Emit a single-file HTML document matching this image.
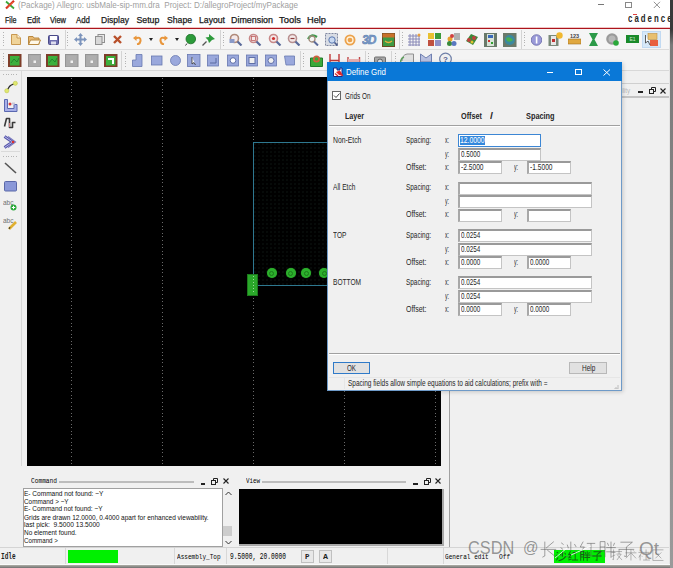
<!DOCTYPE html><html><head><meta charset="utf-8"><style>*{margin:0;padding:0;box-sizing:border-box}
html,body{width:673px;height:568px;overflow:hidden;background:#f0f0f0}
body{position:relative;font-family:"Liberation Sans",sans-serif}
div{position:absolute}
.t{position:absolute;white-space:pre;line-height:1;transform-origin:0 50%}
</style></head><body>
<div style="left:0px;top:0px;width:673px;height:27.5px;background:#fff"></div>
<div style="left:0px;top:27px;width:673px;height:4px;background:linear-gradient(to bottom,#f2c4c4 0,#f2c4c4 25%,#b0161e 25%,#9c1018 75%,#f6c0c0 75%)"></div>
<svg style="position:absolute;left:4.5px;top:0px" width="10" height="9.5" viewBox="0 0 10 9.5"><path d="M1 1.5L9 8.5" stroke="#3aa83a" stroke-width="1.8"/><path d="M1 8.5L9 0.8" stroke="#d83020" stroke-width="2.2"/><path d="M2.5 7L8 2" stroke="#f06030" stroke-width="1"/></svg>
<span class="t" style="left:18px;top:1.10px;font-size:8.5px;font-family:'Liberation Sans', sans-serif;color:#a0a0a0;font-weight:400;transform:scaleX(0.9498);">(Package) Allegro: usbMale-sip-mm.dra  Project: D:/allegroProject/myPackage</span>
<div style="left:598px;top:4px;width:6px;height:1px;background:#777"></div>
<div style="left:625px;top:1.5px;width:6.5px;height:6px;border:1px solid #888"></div>
<svg style="position:absolute;left:653px;top:1px" width="8" height="8" viewBox="0 0 8 8"><path d="M0.8 0.8L7 7M7 0.8L0.8 7" stroke="#888" stroke-width="0.9"/></svg>
<span class="t" style="left:627.5px;top:12.56px;font-size:11.5px;font-family:'Liberation Sans', sans-serif;color:#262626;font-weight:700;letter-spacing:3px;transform:scaleX(0.6794);">cadence</span>
<div style="left:633.4px;top:14px;width:3.7px;height:1.2px;background:#e04040"></div>
<span class="t" style="left:5px;top:16.26px;font-size:8.8px;font-family:'Liberation Sans', sans-serif;color:#1a1a1a;font-weight:400;transform:scaleX(0.8106);-webkit-text-stroke:0.25px #1a1a1a;">File</span>
<span class="t" style="left:26.8px;top:16.26px;font-size:8.8px;font-family:'Liberation Sans', sans-serif;color:#1a1a1a;font-weight:400;transform:scaleX(0.8568);-webkit-text-stroke:0.25px #1a1a1a;">Edit</span>
<span class="t" style="left:50px;top:16.26px;font-size:8.8px;font-family:'Liberation Sans', sans-serif;color:#1a1a1a;font-weight:400;transform:scaleX(0.8456);-webkit-text-stroke:0.25px #1a1a1a;">View</span>
<span class="t" style="left:76.3px;top:16.26px;font-size:8.8px;font-family:'Liberation Sans', sans-serif;color:#1a1a1a;font-weight:400;transform:scaleX(0.8942);-webkit-text-stroke:0.25px #1a1a1a;">Add</span>
<span class="t" style="left:101px;top:16.26px;font-size:8.8px;font-family:'Liberation Sans', sans-serif;color:#1a1a1a;font-weight:400;transform:scaleX(0.9707);-webkit-text-stroke:0.25px #1a1a1a;">Display</span>
<span class="t" style="left:136.4px;top:16.26px;font-size:8.8px;font-family:'Liberation Sans', sans-serif;color:#1a1a1a;font-weight:400;-webkit-text-stroke:0.25px #1a1a1a;">Setup</span>
<span class="t" style="left:166.7px;top:16.26px;font-size:8.8px;font-family:'Liberation Sans', sans-serif;color:#1a1a1a;font-weight:400;transform:scaleX(0.9828);-webkit-text-stroke:0.25px #1a1a1a;">Shape</span>
<span class="t" style="left:198.6px;top:16.26px;font-size:8.8px;font-family:'Liberation Sans', sans-serif;color:#1a1a1a;font-weight:400;transform:scaleX(0.9840);-webkit-text-stroke:0.25px #1a1a1a;">Layout</span>
<span class="t" style="left:231.4px;top:16.26px;font-size:8.8px;font-family:'Liberation Sans', sans-serif;color:#1a1a1a;font-weight:400;transform:scaleX(1.0105);-webkit-text-stroke:0.25px #1a1a1a;">Dimension</span>
<span class="t" style="left:279.4px;top:16.26px;font-size:8.8px;font-family:'Liberation Sans', sans-serif;color:#1a1a1a;font-weight:400;transform:scaleX(1.0707);-webkit-text-stroke:0.25px #1a1a1a;">Tools</span>
<span class="t" style="left:307.2px;top:16.26px;font-size:8.8px;font-family:'Liberation Sans', sans-serif;color:#1a1a1a;font-weight:400;transform:scaleX(1.0501);-webkit-text-stroke:0.25px #1a1a1a;">Help</span>
<div style="left:0px;top:29.3px;width:673px;height:19.7px;background:#f5f5f5"></div>
<div style="left:0px;top:49px;width:673px;height:1px;background:#dcdcdc"></div>
<div style="left:0px;top:50px;width:673px;height:20px;background:#f3f3f3"></div>
<div style="left:0px;top:70px;width:673px;height:1px;background:#d8d8d8"></div>
<div style="left:64.6px;top:30px;width:1px;height:19px;background:#d4d4d4"></div>
<div style="left:219.6px;top:30px;width:1px;height:19px;background:#d4d4d4"></div>
<div style="left:399px;top:30px;width:1px;height:19px;background:#d4d4d4"></div>
<div style="left:520.5px;top:30px;width:1px;height:19px;background:#d4d4d4"></div>
<div style="left:3px;top:32px;width:1px;height:1px;background:#b4b4b4"></div>
<div style="left:3px;top:34.5px;width:1px;height:1px;background:#b4b4b4"></div>
<div style="left:3px;top:37.0px;width:1px;height:1px;background:#b4b4b4"></div>
<div style="left:3px;top:39.5px;width:1px;height:1px;background:#b4b4b4"></div>
<div style="left:3px;top:42.0px;width:1px;height:1px;background:#b4b4b4"></div>
<div style="left:3px;top:44.5px;width:1px;height:1px;background:#b4b4b4"></div>
<div style="left:67px;top:32px;width:1px;height:1px;background:#b4b4b4"></div>
<div style="left:67px;top:34.5px;width:1px;height:1px;background:#b4b4b4"></div>
<div style="left:67px;top:37.0px;width:1px;height:1px;background:#b4b4b4"></div>
<div style="left:67px;top:39.5px;width:1px;height:1px;background:#b4b4b4"></div>
<div style="left:67px;top:42.0px;width:1px;height:1px;background:#b4b4b4"></div>
<div style="left:67px;top:44.5px;width:1px;height:1px;background:#b4b4b4"></div>
<div style="left:223px;top:32px;width:1px;height:1px;background:#b4b4b4"></div>
<div style="left:223px;top:34.5px;width:1px;height:1px;background:#b4b4b4"></div>
<div style="left:223px;top:37.0px;width:1px;height:1px;background:#b4b4b4"></div>
<div style="left:223px;top:39.5px;width:1px;height:1px;background:#b4b4b4"></div>
<div style="left:223px;top:42.0px;width:1px;height:1px;background:#b4b4b4"></div>
<div style="left:223px;top:44.5px;width:1px;height:1px;background:#b4b4b4"></div>
<div style="left:402px;top:32px;width:1px;height:1px;background:#b4b4b4"></div>
<div style="left:402px;top:34.5px;width:1px;height:1px;background:#b4b4b4"></div>
<div style="left:402px;top:37.0px;width:1px;height:1px;background:#b4b4b4"></div>
<div style="left:402px;top:39.5px;width:1px;height:1px;background:#b4b4b4"></div>
<div style="left:402px;top:42.0px;width:1px;height:1px;background:#b4b4b4"></div>
<div style="left:402px;top:44.5px;width:1px;height:1px;background:#b4b4b4"></div>
<div style="left:523.8px;top:32px;width:1px;height:1px;background:#b4b4b4"></div>
<div style="left:523.8px;top:34.5px;width:1px;height:1px;background:#b4b4b4"></div>
<div style="left:523.8px;top:37.0px;width:1px;height:1px;background:#b4b4b4"></div>
<div style="left:523.8px;top:39.5px;width:1px;height:1px;background:#b4b4b4"></div>
<div style="left:523.8px;top:42.0px;width:1px;height:1px;background:#b4b4b4"></div>
<div style="left:523.8px;top:44.5px;width:1px;height:1px;background:#b4b4b4"></div>
<div style="left:121px;top:51px;width:1px;height:19px;background:#d4d4d4"></div>
<div style="left:300px;top:51px;width:1px;height:19px;background:#d4d4d4"></div>
<div style="left:364.6px;top:51px;width:1px;height:19px;background:#d4d4d4"></div>
<div style="left:390.7px;top:51px;width:1px;height:19px;background:#d4d4d4"></div>
<div style="left:3px;top:53px;width:1px;height:1px;background:#b4b4b4"></div>
<div style="left:3px;top:55.5px;width:1px;height:1px;background:#b4b4b4"></div>
<div style="left:3px;top:58.0px;width:1px;height:1px;background:#b4b4b4"></div>
<div style="left:3px;top:60.5px;width:1px;height:1px;background:#b4b4b4"></div>
<div style="left:3px;top:63.0px;width:1px;height:1px;background:#b4b4b4"></div>
<div style="left:3px;top:65.5px;width:1px;height:1px;background:#b4b4b4"></div>
<div style="left:124.5px;top:53px;width:1px;height:1px;background:#b4b4b4"></div>
<div style="left:124.5px;top:55.5px;width:1px;height:1px;background:#b4b4b4"></div>
<div style="left:124.5px;top:58.0px;width:1px;height:1px;background:#b4b4b4"></div>
<div style="left:124.5px;top:60.5px;width:1px;height:1px;background:#b4b4b4"></div>
<div style="left:124.5px;top:63.0px;width:1px;height:1px;background:#b4b4b4"></div>
<div style="left:124.5px;top:65.5px;width:1px;height:1px;background:#b4b4b4"></div>
<div style="left:303.3px;top:53px;width:1px;height:1px;background:#b4b4b4"></div>
<div style="left:303.3px;top:55.5px;width:1px;height:1px;background:#b4b4b4"></div>
<div style="left:303.3px;top:58.0px;width:1px;height:1px;background:#b4b4b4"></div>
<div style="left:303.3px;top:60.5px;width:1px;height:1px;background:#b4b4b4"></div>
<div style="left:303.3px;top:63.0px;width:1px;height:1px;background:#b4b4b4"></div>
<div style="left:303.3px;top:65.5px;width:1px;height:1px;background:#b4b4b4"></div>
<div style="left:367.8px;top:53px;width:1px;height:1px;background:#b4b4b4"></div>
<div style="left:367.8px;top:55.5px;width:1px;height:1px;background:#b4b4b4"></div>
<div style="left:367.8px;top:58.0px;width:1px;height:1px;background:#b4b4b4"></div>
<div style="left:367.8px;top:60.5px;width:1px;height:1px;background:#b4b4b4"></div>
<div style="left:367.8px;top:63.0px;width:1px;height:1px;background:#b4b4b4"></div>
<div style="left:367.8px;top:65.5px;width:1px;height:1px;background:#b4b4b4"></div>
<div style="left:394.8px;top:53px;width:1px;height:1px;background:#b4b4b4"></div>
<div style="left:394.8px;top:55.5px;width:1px;height:1px;background:#b4b4b4"></div>
<div style="left:394.8px;top:58.0px;width:1px;height:1px;background:#b4b4b4"></div>
<div style="left:394.8px;top:60.5px;width:1px;height:1px;background:#b4b4b4"></div>
<div style="left:394.8px;top:63.0px;width:1px;height:1px;background:#b4b4b4"></div>
<div style="left:394.8px;top:65.5px;width:1px;height:1px;background:#b4b4b4"></div>
<svg style="position:absolute;left:10.5px;top:34px" width="10" height="11" viewBox="0 0 10 11"><path d="M0.5 0.5H6L9.5 4V10.5H0.5Z" fill="#f0d49a" stroke="#c89850"/><path d="M6 0.5V4H9.5" fill="#fff4d8" stroke="#c89850"/></svg>
<svg style="position:absolute;left:27.5px;top:35px" width="13" height="10" viewBox="0 0 13 10"><path d="M0.5 1.5H5L6 3H11V9.5H0.5Z" fill="#e8b870" stroke="#b88840"/><path d="M2.5 5H12.5L10.5 9.5H0.5Z" fill="#fff8e8" stroke="#b88840"/></svg>
<svg style="position:absolute;left:48px;top:35px" width="11" height="10" viewBox="0 0 11 10"><rect x="0.5" y="0.5" width="10" height="9" rx="1" fill="#6f6fb0" stroke="#4a4a88"/><rect x="2" y="1" width="7" height="4" fill="#fff"/><rect x="3" y="6.5" width="5" height="3" fill="#dde"/></svg>
<svg style="position:absolute;left:73.5px;top:33px" width="13" height="13" viewBox="0 0 13 13"><path d="M6.5 0L9 3H4ZM6.5 13L9 10H4ZM0 6.5L3 4V9ZM13 6.5L10 4V9Z" fill="#7c94bc"/><path d="M6.5 2V11M2 6.5H11" stroke="#7c94bc" stroke-width="2"/></svg>
<svg style="position:absolute;left:94.5px;top:34px" width="10" height="11" viewBox="0 0 10 11"><rect x="3" y="0.5" width="6.5" height="8" fill="#e8e8e8" stroke="#909090"/><rect x="0.5" y="2.5" width="6.5" height="8" fill="#d8d8d8" stroke="#909090"/></svg>
<svg style="position:absolute;left:113px;top:34.5px" width="9" height="9" viewBox="0 0 9 9"><path d="M1 1L8 8M8 1L1 8" stroke="#b8502a" stroke-width="2.4"/></svg>
<svg style="position:absolute;left:133px;top:34.5px" width="9" height="10" viewBox="0 0 9 10"><path d="M2 3.5 Q8 1 7.5 6 Q7 9 4 9.5" stroke="#e8963c" stroke-width="2" fill="none"/><path d="M0 3L3.5 0.5V6Z" fill="#e8963c"/></svg>
<svg style="position:absolute;left:149px;top:38px" width="4" height="3" viewBox="0 0 4 3"><path d="M0 0H4L2 3Z" fill="#222"/></svg>
<svg style="position:absolute;left:159px;top:34.5px" width="9" height="10" viewBox="0 0 9 10"><path d="M7 3.5 Q1 1 1.5 6 Q2 9 5 9.5" stroke="#e8963c" stroke-width="2" fill="none"/><path d="M9 3L5.5 0.5V6Z" fill="#e8963c"/></svg>
<svg style="position:absolute;left:175px;top:38px" width="4" height="3" viewBox="0 0 4 3"><path d="M0 0H4L2 3Z" fill="#222"/></svg>
<svg style="position:absolute;left:185px;top:33.5px" width="11" height="12" viewBox="0 0 11 12"><circle cx="5.8" cy="5" r="4.8" fill="#2c9a3a" stroke="#1d6e28" stroke-width="0.8"/><path d="M2 9.5L0.5 11.5" stroke="#333"/></svg>
<svg style="position:absolute;left:201.5px;top:33px" width="14" height="13" viewBox="0 0 14 13"><path d="M7 1L13 6L10 7L7 10L6 7L3.5 4.5L7 4Z" fill="#2e9a3c"/><path d="M4.5 8.5L0.5 12.5" stroke="#555" stroke-width="1.2"/></svg>
<svg style="position:absolute;left:228.5px;top:33px" width="14" height="13" viewBox="0 0 14 13"><circle cx="5.5" cy="5.5" r="4" fill="#f4e8e8" stroke="#b08a7a" stroke-width="1.6"/><rect x="0.5" y="6" width="5" height="4" fill="#8a9ac8"/><path d="M8.5 8.5L12.5 12.5" stroke="#5a6a9a" stroke-width="2.2"/></svg>
<svg style="position:absolute;left:248px;top:33px" width="14" height="13" viewBox="0 0 14 13"><circle cx="5.5" cy="5.5" r="4" fill="#f4e8e8" stroke="#c88888" stroke-width="1.6"/><rect x="3.5" y="3.5" width="4" height="4" fill="none" stroke="#c06060" stroke-width="0.8"/><path d="M8.5 8.5L12.5 12.5" stroke="#5a6a9a" stroke-width="2.2"/></svg>
<svg style="position:absolute;left:267.5px;top:33px" width="14" height="13" viewBox="0 0 14 13"><circle cx="5.5" cy="5.5" r="4" fill="#f4e8e8" stroke="#c88888" stroke-width="1.6"/><circle cx="5.5" cy="5.5" r="1.6" fill="#d03030"/><path d="M8.5 8.5L12.5 12.5" stroke="#5a6a9a" stroke-width="2.2"/></svg>
<svg style="position:absolute;left:286.5px;top:33px" width="14" height="13" viewBox="0 0 14 13"><circle cx="5.5" cy="5.5" r="4" fill="#f4e8e8" stroke="#b89090" stroke-width="1.6"/><path d="M3.5 5.5H7.5" stroke="#904040" stroke-width="1.2"/><path d="M8.5 8.5L12.5 12.5" stroke="#5a6a9a" stroke-width="2.2"/></svg>
<svg style="position:absolute;left:306.5px;top:33px" width="12" height="13" viewBox="0 0 12 13"><path d="M1 6 Q4 0 10 4" stroke="#3a9a4a" stroke-width="2.2" fill="none"/><circle cx="5" cy="6" r="3" fill="none" stroke="#a08a7a" stroke-width="1.3"/><path d="M7 8.5L11 12.5" stroke="#5a6a9a" stroke-width="2"/></svg>
<svg style="position:absolute;left:324.5px;top:33px" width="13" height="13" viewBox="0 0 13 13"><rect x="0.5" y="0.5" width="12" height="12" fill="#d8dce4" stroke="#8088a0" stroke-dasharray="2 1"/><circle cx="7" cy="7" r="3.2" fill="#c8d8f0" stroke="#5a78b0"/><path d="M9.5 9.5L12.5 12.5" stroke="#4a5a8a" stroke-width="1.6"/></svg>
<svg style="position:absolute;left:344px;top:33.5px" width="12" height="12" viewBox="0 0 12 12"><circle cx="6" cy="6" r="5.5" fill="#eca24c"/><circle cx="6" cy="6" r="3" fill="none" stroke="#fff2dc" stroke-width="1.3"/></svg>
<svg style="position:absolute;left:361.5px;top:32px" width="15" height="14" viewBox="0 0 15 14"><text x="0" y="12" font-size="12" font-family="Liberation Sans" font-weight="700" font-style="italic" fill="#7a9ccc" stroke="#5a7aaa" stroke-width="0.5" letter-spacing="-1">3D</text></svg>
<svg style="position:absolute;left:381.5px;top:32.5px" width="13" height="14" viewBox="0 0 13 14"><rect x="0.5" y="0.5" width="12" height="13" fill="#3c9a44" stroke="#6a4a22"/><rect x="0.5" y="0.5" width="12" height="4" fill="#c8702a"/><path d="M3 8Q6.5 11 10 8" stroke="#e8b040" stroke-width="1.4" fill="none"/></svg>
<svg style="position:absolute;left:407px;top:32.5px" width="14" height="14" viewBox="0 0 14 14"><path d="M1 3H13M1 6H13M1 9H13M1 12H13M3 1V13M6 1V13M9 1V13M12 1V13" stroke="#8a8ab8" stroke-width="1"/><circle cx="12" cy="2" r="1.5" fill="#e8a040"/></svg>
<svg style="position:absolute;left:427.5px;top:33px" width="13" height="13" viewBox="0 0 13 13"><rect x="0" y="0" width="6" height="6" fill="#e8c030"/><rect x="7" y="0" width="6" height="6" fill="#3a9a3a"/><rect x="0" y="7" width="6" height="6" fill="#c05040"/><rect x="7" y="7" width="6" height="6" fill="#9090c8"/></svg>
<svg style="position:absolute;left:445.5px;top:32.5px" width="14" height="14" viewBox="0 0 14 14"><rect x="8" y="0" width="6" height="7" fill="#b0b0b0"/><circle cx="4" cy="6" r="2.5" fill="#e8a030"/><circle cx="3.5" cy="10.5" r="2.5" fill="#3a8a3a"/><circle cx="8" cy="10.5" r="2.5" fill="#5a78c0"/><circle cx="6" cy="3" r="2" fill="#d04040"/></svg>
<svg style="position:absolute;left:465px;top:33px" width="14" height="13" viewBox="0 0 14 13"><path d="M1 8L6 1L13 4L8 12Z" fill="#3a8a3a"/><circle cx="4" cy="7" r="2" fill="#c04040"/><circle cx="9" cy="5" r="2" fill="#c04040"/><circle cx="7" cy="9" r="1.5" fill="#e0c030"/></svg>
<svg style="position:absolute;left:484px;top:32.5px" width="13" height="14" viewBox="0 0 13 14"><rect x="0" y="0" width="13" height="14" fill="#6a7a6a"/><rect x="3" y="1" width="7" height="12" fill="#d8e4d8"/><rect x="4" y="2" width="5" height="3" fill="#3a6ab8"/><rect x="4" y="7" width="2" height="2" fill="#d03030"/><rect x="7" y="9" width="2" height="2" fill="#30a030"/></svg>
<svg style="position:absolute;left:503px;top:32.5px" width="13.5" height="14" viewBox="0 0 13.5 14"><rect x="0" y="0" width="13.5" height="14" fill="#6a7a6a"/><circle cx="6.8" cy="7" r="5" fill="#3a8aa0"/><path d="M3 5Q7 3 10 7Q7 10 4 8" fill="#4ab050"/></svg>
<svg style="position:absolute;left:531px;top:33.5px" width="11" height="12" viewBox="0 0 11 12"><circle cx="5.5" cy="6" r="5.3" fill="#9a9ad8" stroke="#6a6aa8" stroke-width="0.8"/><rect x="4.8" y="2.5" width="1.6" height="7" fill="#fff"/></svg>
<svg style="position:absolute;left:548px;top:32px" width="15" height="14" viewBox="0 0 15 14"><rect x="0.5" y="3" width="10" height="11" fill="#7a8a7a"/><rect x="3" y="4" width="5" height="9" fill="#e8e8e8"/><rect x="4" y="7" width="3" height="3" fill="#c03030"/><circle cx="11.5" cy="3.5" r="3.2" fill="#f0b830"/></svg>
<svg style="position:absolute;left:568px;top:33px" width="13" height="12" viewBox="0 0 13 12"><rect x="0" y="6" width="13" height="5" fill="#e0a840" stroke="#a07020" stroke-width="0.6"/><text x="6.5" y="5" font-size="5.5" font-family="Liberation Sans" text-anchor="middle" fill="#444" font-weight="700">123</text></svg>
<svg style="position:absolute;left:589px;top:33px" width="9" height="13" viewBox="0 0 9 13"><path d="M0 0H9L5.5 6.5L9 13H0L3.5 6.5Z" fill="#2c9a48"/></svg>
<svg style="position:absolute;left:606px;top:33px" width="13" height="13" viewBox="0 0 13 13"><circle cx="6" cy="6" r="5.8" fill="#9a9a9a"/><circle cx="6" cy="6" r="3.5" fill="#b8b8b8"/><circle cx="10" cy="10" r="2.8" fill="#2aa83a"/></svg>
<svg style="position:absolute;left:625.5px;top:34.5px" width="13" height="8" viewBox="0 0 13 8"><rect x="0" y="0" width="13" height="8" fill="#1a8a2a"/><text x="6.5" y="6" font-size="5" font-family="Liberation Sans" text-anchor="middle" fill="#cfe8cf">E1</text></svg>
<div style="left:641.8px;top:30.9px;width:19px;height:17.3px;background:#d6e8f8;border:1px solid #c2daf2"></div>
<svg style="position:absolute;left:645px;top:32.5px" width="14" height="13" viewBox="0 0 14 13"><rect x="3" y="0.5" width="9" height="6" fill="#e8c070" stroke="#c09040" stroke-width="0.6"/><rect x="5" y="7" width="8" height="6" fill="#e86040"/><path d="M0.5 2L0.5 10L3 8L5 12" stroke="#333" stroke-width="0.8" fill="#fff"/></svg>
<svg style="position:absolute;left:8.2px;top:53.8px" width="13.5" height="13.5" viewBox="0 0 13.5 13.5"><rect x="1" y="1" width="11.5" height="11.5" fill="#3cb03c" stroke="#7e3e2a" stroke-width="2"/><path d="M3 9L6 5L9 8L11 4" stroke="#1e7a2a" stroke-width="0.8" fill="none"/></svg>
<svg style="position:absolute;left:27.5px;top:53.8px" width="13.5" height="13.5" viewBox="0 0 13.5 13.5"><rect x="0.5" y="0.5" width="12.5" height="12.5" fill="#aaaaaa" stroke="#949494"/><path d="M2.5 3H11M2.5 5H11" stroke="#b8b8b8" stroke-width="0.6"/><rect x="5.5" y="6.5" width="2.5" height="2.5" fill="#f0f0f0"/></svg>
<svg style="position:absolute;left:46.3px;top:53.8px" width="13.5" height="13.5" viewBox="0 0 13.5 13.5"><rect x="1" y="1" width="11.5" height="11.5" fill="#3cb03c" stroke="#7e3e2a" stroke-width="2"/><path d="M3 9L6 5L9 8L11 4" stroke="#1e7a2a" stroke-width="0.8" fill="none"/></svg>
<svg style="position:absolute;left:65.4px;top:53.8px" width="13.5" height="13.5" viewBox="0 0 13.5 13.5"><rect x="0.5" y="0.5" width="12.5" height="12.5" fill="#aaaaaa" stroke="#949494"/><path d="M2.5 3H11M2.5 5H11" stroke="#b8b8b8" stroke-width="0.6"/><rect x="5.5" y="6.5" width="2.5" height="2.5" fill="#f0f0f0"/></svg>
<svg style="position:absolute;left:85px;top:53.8px" width="13.5" height="13.5" viewBox="0 0 13.5 13.5"><rect x="0.5" y="0.5" width="12.5" height="12.5" fill="#aaaaaa" stroke="#949494"/><path d="M2.5 3H11M2.5 5H11" stroke="#b8b8b8" stroke-width="0.6"/><rect x="5.5" y="6.5" width="2.5" height="2.5" fill="#f0f0f0"/></svg>
<svg style="position:absolute;left:104px;top:53.8px" width="13.5" height="13.5" viewBox="0 0 13.5 13.5"><rect x="1" y="1" width="11.5" height="11.5" fill="#3cb03c" stroke="#7e3e2a" stroke-width="2"/><path d="M4 4H10V10H8V6H4Z" fill="#fff"/></svg>
<svg style="position:absolute;left:132px;top:54.3px" width="14" height="13" viewBox="0 0 14 13"><path d="M0.5 12.5V6H4V0.5H10V12.5Z" fill="#9aa8dc" stroke="#6878b0" stroke-width="0.8"/></svg>
<svg style="position:absolute;left:150.5px;top:54.3px" width="14" height="13" viewBox="0 0 14 13"><rect x="0.5" y="2" width="10.5" height="9" fill="#9aa8dc" stroke="#6878b0" stroke-width="0.8"/></svg>
<svg style="position:absolute;left:169.5px;top:54.3px" width="14" height="13" viewBox="0 0 14 13"><circle cx="5.5" cy="6.5" r="5" fill="#9aa8dc" stroke="#6878b0" stroke-width="0.8"/></svg>
<svg style="position:absolute;left:187.4px;top:54.3px" width="14" height="13" viewBox="0 0 14 13"><rect x="0.5" y="0.5" width="12.5" height="12" fill="#9aa8dc" stroke="#6878b0" stroke-width="0.8"/><path d="M5 3L5 10L7 8.5L8.5 11" stroke="#333" stroke-width="0.8" fill="#fff"/></svg>
<svg style="position:absolute;left:207.4px;top:54.3px" width="14" height="13" viewBox="0 0 14 13"><rect x="0.5" y="1" width="11" height="11" fill="#9aa8dc" stroke="#6878b0" stroke-width="0.8"/><path d="M3 9H9V4" stroke="#5a6aa0" fill="none"/></svg>
<svg style="position:absolute;left:227px;top:54.3px" width="14" height="13" viewBox="0 0 14 13"><rect x="0.5" y="1" width="11" height="11" fill="#9aa8dc" stroke="#6878b0" stroke-width="0.8"/><circle cx="6" cy="6.5" r="2.8" fill="#fff" stroke="#6070a8"/></svg>
<svg style="position:absolute;left:245.8px;top:54.3px" width="14" height="13" viewBox="0 0 14 13"><rect x="0.5" y="1" width="11" height="11" fill="#9aa8dc" stroke="#6878b0" stroke-width="0.8"/><rect x="3" y="3.5" width="6" height="6" fill="#f0f0f0" stroke="#6070a8"/></svg>
<svg style="position:absolute;left:264.6px;top:54.3px" width="14" height="13" viewBox="0 0 14 13"><rect x="0.5" y="1" width="11" height="11" fill="#9aa8dc" stroke="#6878b0" stroke-width="0.8"/><circle cx="6" cy="6.5" r="3" fill="#f0f0f0" stroke="#6070a8"/></svg>
<svg style="position:absolute;left:284.2px;top:54.3px" width="14" height="13" viewBox="0 0 14 13"><path d="M0.5 2H10.5V11H2Z" fill="#9aa8dc" stroke="#6878b0" stroke-width="0.8"/></svg>
<svg style="position:absolute;left:309.8px;top:53.8px" width="13" height="13" viewBox="0 0 13 13"><path d="M0.5 4H12.5V12.5H0.5Z" fill="#3aa83a" stroke="#207a2a"/><circle cx="6.5" cy="5" r="3.5" fill="#d06040"/><circle cx="6.5" cy="5" r="1.8" fill="#3aa83a"/></svg>
<svg style="position:absolute;left:329.4px;top:53.8px" width="11" height="13" viewBox="0 0 11 13"><path d="M1 0V13M10 0V13M1 6.5H10" stroke="#c03838" stroke-width="1.4"/></svg>
<svg style="position:absolute;left:347.4px;top:55.8px" width="13.5" height="10" viewBox="0 0 13.5 10"><path d="M1 1V9M12.5 1V9" stroke="#c04848" stroke-width="1.4"/><rect x="1" y="3" width="11.5" height="3" fill="#e8b0b0"/></svg>
<svg style="position:absolute;left:374.4px;top:53.8px" width="12" height="13" viewBox="0 0 12 13"><rect x="0.5" y="3" width="11" height="9" rx="1" fill="#a8a8a8" stroke="#707070"/><circle cx="6" cy="7.5" r="2.5" fill="#e0e0e0" stroke="#606060"/></svg>
<svg style="position:absolute;left:399.7px;top:52.8px" width="14.5" height="9" viewBox="0 0 14.5 9"><path d="M2 8Q2 2 7 1H13.5V9" fill="#e0e0e0" stroke="#909090"/><path d="M0.5 9Q1 5 4 4" stroke="#60a060" stroke-width="1.5" fill="none"/></svg>
<svg style="position:absolute;left:419.5px;top:52.8px" width="12" height="9" viewBox="0 0 12 9"><path d="M0.5 1L6 5L11.5 1V9H0.5Z" fill="#b8c0e0" stroke="#7080b0"/></svg>
<svg style="position:absolute;left:439px;top:52.3px" width="13" height="10" viewBox="0 0 13 10"><circle cx="6.5" cy="7" r="5.8" fill="#f0f0f0" stroke="#7080a8" stroke-width="1.2"/><text x="6.5" y="9.5" font-size="8" font-family="Liberation Sans" text-anchor="middle" fill="#506090" font-weight="700">?</text></svg>
<div style="left:21px;top:71px;width:1px;height:395px;background:#d8d8d8"></div>
<div style="left:3px;top:74px;width:1px;height:1px;background:#b4b4b4"></div>
<div style="left:5.5px;top:74px;width:1px;height:1px;background:#b4b4b4"></div>
<div style="left:8.0px;top:74px;width:1px;height:1px;background:#b4b4b4"></div>
<div style="left:10.5px;top:74px;width:1px;height:1px;background:#b4b4b4"></div>
<div style="left:13.0px;top:74px;width:1px;height:1px;background:#b4b4b4"></div>
<div style="left:15.5px;top:74px;width:1px;height:1px;background:#b4b4b4"></div>
<div style="left:1px;top:150.5px;width:19px;height:1px;background:#dadada"></div>
<div style="left:3px;top:155.5px;width:1px;height:1px;background:#b4b4b4"></div>
<div style="left:5.5px;top:155.5px;width:1px;height:1px;background:#b4b4b4"></div>
<div style="left:8.0px;top:155.5px;width:1px;height:1px;background:#b4b4b4"></div>
<div style="left:10.5px;top:155.5px;width:1px;height:1px;background:#b4b4b4"></div>
<div style="left:13.0px;top:155.5px;width:1px;height:1px;background:#b4b4b4"></div>
<div style="left:15.5px;top:155.5px;width:1px;height:1px;background:#b4b4b4"></div>
<svg style="position:absolute;left:3px;top:80px" width="15" height="14" viewBox="0 0 15 14"><path d="M4 10.5L6.5 6.5L7.5 5.5L11.5 3.5" stroke="#2a2a2a" stroke-width="1.3" fill="none"/><circle cx="3.8" cy="10.8" r="2.1" fill="#dfe870" stroke="#b8c040" stroke-width="0.5"/><circle cx="12.3" cy="3.3" r="2.1" fill="#dfe870" stroke="#b8c040" stroke-width="0.5"/></svg>
<svg style="position:absolute;left:3px;top:98.5px" width="15" height="14" viewBox="0 0 15 14"><path d="M1.5 0.5H4.5V9.5H11V5.5H14V12.5H1.5Z" fill="#a8b0e8" stroke="#5a68b0" stroke-width="1"/><circle cx="7" cy="5" r="1.5" fill="#d83838"/><rect x="9" y="3.5" width="3" height="2" fill="#c8c8d8"/></svg>
<svg style="position:absolute;left:3px;top:117px" width="14" height="12" viewBox="0 0 14 12"><path d="M1.5 9.5L3.5 1.5H6.5V10.5H9.5V5.5H12.5" stroke="#3a3a3a" stroke-width="1.6" fill="none" stroke-linejoin="round"/><path d="M6.5 6V10" stroke="#d08080" stroke-width="1"/></svg>
<svg style="position:absolute;left:3px;top:134.5px" width="14" height="14" viewBox="0 0 14 14"><path d="M1.5 1.5L9.5 7L1.5 12.5" stroke="#5a5aa8" stroke-width="3" fill="none"/><path d="M1.5 1.5L9.5 7L1.5 12.5" stroke="#b8b8f0" stroke-width="1" fill="none"/><path d="M5 1.5L12.5 7L5 12.5" stroke="#7a7ac0" stroke-width="1.2" fill="none"/><circle cx="10" cy="7" r="1.3" fill="#d83030"/></svg>
<svg style="position:absolute;left:4px;top:162px" width="13" height="12" viewBox="0 0 13 12"><path d="M1 1L12 11" stroke="#555" stroke-width="1.6"/></svg>
<svg style="position:absolute;left:4px;top:181px" width="13" height="10.5" viewBox="0 0 13 10.5"><rect x="0.5" y="0.5" width="12" height="9.5" rx="1" fill="#8a98d8" stroke="#5a68a8"/></svg>
<svg style="position:absolute;left:3px;top:199px" width="15" height="12" viewBox="0 0 15 12"><text x="0" y="6" font-size="6.5" font-family="Liberation Sans" fill="#707070">abc</text><circle cx="10.5" cy="8.5" r="3" fill="#28a838"/><path d="M8.8 8.5H12.2M10.5 6.8V10.2" stroke="#fff" stroke-width="1"/></svg>
<svg style="position:absolute;left:3px;top:216.5px" width="15" height="13" viewBox="0 0 15 13"><text x="0" y="6" font-size="6.5" font-family="Liberation Sans" fill="#707070">abc</text><path d="M6 12L13 5" stroke="#e0b030" stroke-width="2.6"/><path d="M6 12L7 10" stroke="#333" stroke-width="1"/></svg>
<div style="left:27px;top:77px;width:414px;height:389px;background:#000"></div>
<div style="left:71px;top:78px;width:1px;height:388px;background:repeating-linear-gradient(to bottom,#6a6a6a 0,#6a6a6a 1px,transparent 1px,transparent 3.6px)"></div>
<div style="left:162px;top:78px;width:1px;height:388px;background:repeating-linear-gradient(to bottom,#6a6a6a 0,#6a6a6a 1px,transparent 1px,transparent 3.6px)"></div>
<div style="left:253px;top:78px;width:1px;height:388px;background:repeating-linear-gradient(to bottom,#6a6a6a 0,#6a6a6a 1px,transparent 1px,transparent 3.6px)"></div>
<div style="left:344px;top:78px;width:1px;height:388px;background:repeating-linear-gradient(to bottom,#6a6a6a 0,#6a6a6a 1px,transparent 1px,transparent 3.6px)"></div>
<div style="left:435px;top:78px;width:1px;height:388px;background:repeating-linear-gradient(to bottom,#6a6a6a 0,#6a6a6a 1px,transparent 1px,transparent 3.6px)"></div>
<div style="left:253px;top:142px;width:80px;height:143px;background-image:radial-gradient(#0e1613 0.6px,transparent 0.8px);background-size:4px 4px"></div>
<div style="left:252.5px;top:142px;width:80px;height:1px;background:#2e7890"></div>
<div style="left:252.5px;top:142px;width:1px;height:143px;background:#2e7890"></div>
<div style="left:252.5px;top:285px;width:80px;height:1px;background:#2e7890"></div>
<div style="left:253px;top:278px;width:1px;height:12px;background:#d0d0d0"></div>
<div style="left:247px;top:274px;width:11px;height:21.5px;background:#2aa82a;border:1px solid #1c7a1c"></div>
<div style="left:252.5px;top:276px;width:1px;height:18px;background:repeating-linear-gradient(to bottom,#9ad89a 0,#9ad89a 1px,transparent 1px,transparent 3px)"></div>
<div style="left:266.5px;top:268px;width:10px;height:10px;background:#2cb02c;border-radius:50%;box-shadow:0 0 1px #1a6a1a"></div>
<div style="left:269.0px;top:270.5px;width:5px;height:5px;border:1px solid #1c7a1c;border-radius:50%"></div>
<div style="left:285.5px;top:268px;width:10px;height:10px;background:#2cb02c;border-radius:50%;box-shadow:0 0 1px #1a6a1a"></div>
<div style="left:288.0px;top:270.5px;width:5px;height:5px;border:1px solid #1c7a1c;border-radius:50%"></div>
<div style="left:301px;top:268px;width:10px;height:10px;background:#2cb02c;border-radius:50%;box-shadow:0 0 1px #1a6a1a"></div>
<div style="left:303.5px;top:270.5px;width:5px;height:5px;border:1px solid #1c7a1c;border-radius:50%"></div>
<div style="left:319.4px;top:268px;width:10px;height:10px;background:#2cb02c;border-radius:50%;box-shadow:0 0 1px #1a6a1a"></div>
<div style="left:321.9px;top:270.5px;width:5px;height:5px;border:1px solid #1c7a1c;border-radius:50%"></div>
<div style="left:449px;top:83px;width:1px;height:464px;background:#a0a0a0"></div>
<div style="left:450px;top:83px;width:220px;height:1px;background:#cfcfcf"></div>
<div style="left:450px;top:96px;width:220px;height:1.5px;background:#c4c4c4"></div>
<span class="t" style="left:621px;top:86.63px;font-size:7px;font-family:'Liberation Sans', sans-serif;color:#b8b8b8;font-weight:400;transform:scaleX(0.8889);">ility</span>
<div style="left:638px;top:91px;width:4.5px;height:1.5px;background:#222"></div>
<svg style="position:absolute;left:648.5px;top:87px" width="7" height="7" viewBox="0 0 7 7"><rect x="0.5" y="2.5" width="4" height="4" fill="none" stroke="#222"/><path d="M2.5 2.5V0.5H6.5V4.5H4.5" fill="none" stroke="#222"/></svg>
<svg style="position:absolute;left:660px;top:87.5px" width="6" height="6" viewBox="0 0 6 6"><path d="M0.5 0.5L5.5 5.5M5.5 0.5L0.5 5.5" stroke="#222" stroke-width="1.1"/></svg>
<span class="t" style="left:31px;top:476.78px;font-size:8px;font-family:'Liberation Mono', monospace;color:#000;font-weight:400;transform:scaleX(0.7736);">Command</span>
<div style="left:59px;top:481px;width:134.5px;height:2px;background:#bcbcbc"></div>
<div style="left:200.5px;top:483px;width:4.5px;height:1.5px;background:#222"></div>
<svg style="position:absolute;left:211px;top:477.5px" width="7" height="7" viewBox="0 0 7 7"><rect x="0.5" y="2.5" width="4" height="4" fill="none" stroke="#222"/><path d="M2.5 2.5V0.5H6.5V4.5H4.5" fill="none" stroke="#222"/></svg>
<svg style="position:absolute;left:222.5px;top:478px" width="6" height="6" viewBox="0 0 6 6"><path d="M0.5 0.5L5.5 5.5M5.5 0.5L0.5 5.5" stroke="#222" stroke-width="1.1"/></svg>
<div style="left:22.5px;top:487.5px;width:200px;height:59px;background:#fff;border:1px solid #a0a0a0"></div>
<svg style="position:absolute;left:224.5px;top:491px" width="7" height="5" viewBox="0 0 7 5"><path d="M0.5 4L3.5 1L6.5 4" stroke="#333" fill="none"/></svg>
<div style="left:223px;top:526px;width:9px;height:10px;background:#cdcdcd"></div>
<svg style="position:absolute;left:224.5px;top:540px" width="7" height="5" viewBox="0 0 7 5"><path d="M0.5 1L3.5 4L6.5 1" stroke="#333" fill="none"/></svg>
<span class="t" style="left:24px;top:489.54px;font-size:7.6px;font-family:'Liberation Sans', sans-serif;color:#111;font-weight:400;transform:scaleX(0.8609);">E- Command not found: ~Y</span>
<span class="t" style="left:24px;top:497.54px;font-size:7.6px;font-family:'Liberation Sans', sans-serif;color:#111;font-weight:400;transform:scaleX(0.8385);">Command &gt; ~Y</span>
<span class="t" style="left:24px;top:505.14px;font-size:7.6px;font-family:'Liberation Sans', sans-serif;color:#111;font-weight:400;transform:scaleX(0.8511);">E- Command not found: ~Y</span>
<span class="t" style="left:24px;top:513.54px;font-size:7.6px;font-family:'Liberation Sans', sans-serif;color:#111;font-weight:400;transform:scaleX(0.8580);">Grids are drawn 12.0000, 0.4000 apart for enhanced viewability.</span>
<span class="t" style="left:24px;top:521.14px;font-size:7.6px;font-family:'Liberation Sans', sans-serif;color:#111;font-weight:400;transform:scaleX(0.8758);">last pick:  9.5000 13.5000</span>
<span class="t" style="left:24px;top:529.34px;font-size:7.6px;font-family:'Liberation Sans', sans-serif;color:#111;font-weight:400;transform:scaleX(0.8475);">No element found.</span>
<span class="t" style="left:24px;top:537.34px;font-size:7.6px;font-family:'Liberation Sans', sans-serif;color:#111;font-weight:400;transform:scaleX(0.8153);">Command &gt;</span>
<span class="t" style="left:246px;top:477.18px;font-size:8px;font-family:'Liberation Mono', monospace;color:#000;font-weight:400;transform:scaleX(0.7290);">View</span>
<div style="left:262px;top:481px;width:144px;height:2px;background:#bcbcbc"></div>
<div style="left:413px;top:483px;width:4.5px;height:1.5px;background:#222"></div>
<svg style="position:absolute;left:423.5px;top:477.5px" width="7" height="7" viewBox="0 0 7 7"><rect x="0.5" y="2.5" width="4" height="4" fill="none" stroke="#222"/><path d="M2.5 2.5V0.5H6.5V4.5H4.5" fill="none" stroke="#222"/></svg>
<svg style="position:absolute;left:435px;top:478px" width="6" height="6" viewBox="0 0 6 6"><path d="M0.5 0.5L5.5 5.5M5.5 0.5L0.5 5.5" stroke="#222" stroke-width="1.1"/></svg>
<div style="left:239px;top:489px;width:205px;height:57px;background:#000;border-right:2px solid #a8a8a8;border-bottom:2px solid #a8a8a8"></div>
<div style="left:0px;top:547px;width:670px;height:1px;background:#d4d4d4"></div>
<span class="t" style="left:1.2px;top:552.76px;font-size:8.5px;font-family:'Liberation Mono', monospace;color:#222;font-weight:700;transform:scaleX(0.7155);">Idle</span>
<div style="left:64.7px;top:548px;width:1px;height:17px;background:#d8d8d8"></div>
<div style="left:173.7px;top:548px;width:1px;height:17px;background:#d8d8d8"></div>
<div style="left:226px;top:548px;width:1px;height:17px;background:#d8d8d8"></div>
<div style="left:387px;top:548px;width:1px;height:17px;background:#d8d8d8"></div>
<div style="left:442.5px;top:548px;width:1px;height:17px;background:#d8d8d8"></div>
<div style="left:67.5px;top:550px;width:50.5px;height:13px;background:#00f000"></div>
<span class="t" style="left:176.6px;top:553.48px;font-size:8px;font-family:'Liberation Mono', monospace;color:#000;font-weight:400;transform:scaleX(0.7551);">Assembly_Top</span>
<span class="t" style="left:230px;top:552.76px;font-size:8.5px;font-family:'Liberation Mono', monospace;color:#000;font-weight:400;transform:scaleX(0.7319);">9.5000, 20.0000</span>
<div style="left:301.3px;top:550.2px;width:12.5px;height:12.5px;background:#e8e8e8;border:1px solid #c0c0c0"></div>
<span class="t" style="left:305px;top:552.98px;font-size:8px;font-family:'Liberation Mono', monospace;color:#222;font-weight:700;transform:scaleX(0.9351);">P</span>
<div style="left:319.2px;top:550.2px;width:12.5px;height:12.5px;background:#e8e8e8;border:1px solid #c0c0c0"></div>
<span class="t" style="left:323px;top:552.98px;font-size:8px;font-family:'Liberation Mono', monospace;color:#222;font-weight:700;transform:scaleX(1.0390);">A</span>
<span class="t" style="left:445.3px;top:553.18px;font-size:8px;font-family:'Liberation Mono', monospace;color:#000;font-weight:400;transform:scaleX(0.7586);">General edit</span>
<span class="t" style="left:498.8px;top:553.18px;font-size:8px;font-family:'Liberation Mono', monospace;color:#000;font-weight:400;transform:scaleX(0.7774);">Off</span>
<div style="left:554px;top:549.5px;width:51px;height:13.5px;background:#00f000"></div>
<div style="left:669px;top:29px;width:1px;height:536px;background:#e4e4e4"></div>
<div style="left:670px;top:0px;width:3px;height:568px;background:linear-gradient(to bottom,#3a3a3a 0,#3a3a3a 30px,#7a7a7a 45px,#9a9a9a 100%)"></div>
<div style="left:0px;top:564px;width:670px;height:1px;background:#fafafa"></div>
<div style="left:0px;top:565px;width:670px;height:3px;background:linear-gradient(to bottom,#b0b0a8,#707070)"></div>
<div style="left:327px;top:62px;width:295px;height:329px;background:#f0f0f0;border:1px solid #6e9ac8;border-top:none;box-shadow:1px 1px 4px rgba(0,0,0,.18)"></div>
<div style="left:327px;top:62px;width:295px;height:19px;background:#0a78d7"></div>
<svg style="position:absolute;left:332.5px;top:66.5px" width="11" height="10" viewBox="0 0 11 10"><path d="M0.5 1H4V3H7V1H9V9.5H0.5Z" fill="#fff" stroke="#1a2a8a" stroke-width="1"/><path d="M3 5L7 3.5L10.5 9L6 8Z" fill="#e02828"/><path d="M2 6.5L5 9" stroke="#e02828" stroke-width="1.2"/></svg>
<span class="t" style="left:346px;top:67.66px;font-size:9px;font-family:'Liberation Sans', sans-serif;color:#fff;font-weight:400;transform:scaleX(0.8785);">Define Grid</span>
<div style="left:546.5px;top:72px;width:6.5px;height:1px;background:#fff"></div>
<div style="left:575px;top:68.7px;width:6.5px;height:6px;border:1px solid #fff"></div>
<svg style="position:absolute;left:603px;top:68.5px" width="7.5" height="7" viewBox="0 0 7.5 7"><path d="M0.5 0.5L7 6.5M7 0.5L0.5 6.5" stroke="#fff" stroke-width="1"/></svg>
<div style="left:332px;top:91px;width:8.5px;height:8.5px;background:#fff;border:1px solid #666"></div>
<svg style="position:absolute;left:333px;top:92px" width="7" height="7" viewBox="0 0 7 7"><path d="M1 3.5L3 5.5L6.5 1.5" stroke="#444" stroke-width="1" fill="none"/></svg>
<span class="t" style="left:345px;top:91.66px;font-size:9px;font-family:'Liberation Sans', sans-serif;color:#222;font-weight:400;transform:scaleX(0.7080);">Grids On</span>
<span class="t" style="left:345px;top:111.96px;font-size:9px;font-family:'Liberation Sans', sans-serif;color:#262626;font-weight:700;transform:scaleX(0.7906);">Layer</span>
<span class="t" style="left:461.4px;top:112.26px;font-size:9px;font-family:'Liberation Sans', sans-serif;color:#262626;font-weight:700;transform:scaleX(0.8072);">Offset</span>
<span class="t" style="left:490px;top:112.26px;font-size:9px;font-family:'Liberation Sans', sans-serif;color:#262626;font-weight:700;transform:scaleX(1.1925);">/</span>
<span class="t" style="left:526px;top:112.26px;font-size:9px;font-family:'Liberation Sans', sans-serif;color:#262626;font-weight:700;transform:scaleX(0.8168);">Spacing</span>
<div style="left:329px;top:125px;width:291px;height:1px;background:#a0a0a0"></div>
<div style="left:329px;top:126px;width:291px;height:1px;background:#fff"></div>
<span class="t" style="left:332.6px;top:136.26px;font-size:9px;font-family:'Liberation Sans', sans-serif;color:#262626;font-weight:400;transform:scaleX(0.7567);">Non-Etch</span>
<span class="t" style="left:406px;top:136.26px;font-size:9px;font-family:'Liberation Sans', sans-serif;color:#262626;font-weight:400;transform:scaleX(0.7136);">Spacing:</span>
<span class="t" style="left:444.6px;top:136.26px;font-size:9px;font-family:'Liberation Sans', sans-serif;color:#262626;font-weight:400;transform:scaleX(0.5702);">x:</span>
<span class="t" style="left:444.8px;top:149.86px;font-size:9px;font-family:'Liberation Sans', sans-serif;color:#262626;font-weight:400;transform:scaleX(0.5702);">y:</span>
<span class="t" style="left:406px;top:163.06px;font-size:9px;font-family:'Liberation Sans', sans-serif;color:#262626;font-weight:400;transform:scaleX(0.7777);">Offset:</span>
<span class="t" style="left:444.6px;top:163.06px;font-size:9px;font-family:'Liberation Sans', sans-serif;color:#262626;font-weight:400;transform:scaleX(0.5702);">x:</span>
<span class="t" style="left:513.7px;top:163.06px;font-size:9px;font-family:'Liberation Sans', sans-serif;color:#262626;font-weight:400;transform:scaleX(0.5702);">y:</span>
<div style="left:457.8px;top:134.29999999999998px;width:83.5px;height:13px;background:#fff;border:1px solid #3c86d4"></div>
<div style="left:459.5px;top:136.29999999999998px;width:25.5px;height:8.5px;background:#3388dd"></div>
<span class="t" style="left:460px;top:136.26px;font-size:9px;font-family:'Liberation Sans', sans-serif;color:#fff;font-weight:400;transform:scaleX(0.7558);">12.0000</span>
<div style="left:457.8px;top:147.79999999999998px;width:83.19999999999999px;height:13px;background:#fff;border:1px solid #c4c4c4;border-top:2px solid #9a9a9a;border-left:2px solid #a8a8a8"></div>
<span class="t" style="left:460.6px;top:149.96px;font-size:9px;font-family:'Liberation Sans', sans-serif;color:#262626;font-weight:400;transform:scaleX(0.7010);">0.5000</span>
<div style="left:457.8px;top:161.29999999999998px;width:44.5px;height:13px;background:#fff;border:1px solid #c4c4c4;border-top:2px solid #9a9a9a;border-left:2px solid #a8a8a8"></div>
<span class="t" style="left:460.6px;top:163.46px;font-size:9px;font-family:'Liberation Sans', sans-serif;color:#262626;font-weight:400;transform:scaleX(0.7375);">-2.5000</span>
<div style="left:526.8px;top:161.29999999999998px;width:44.7px;height:13px;background:#fff;border:1px solid #c4c4c4;border-top:2px solid #9a9a9a;border-left:2px solid #a8a8a8"></div>
<span class="t" style="left:529.5999999999999px;top:163.46px;font-size:9px;font-family:'Liberation Sans', sans-serif;color:#262626;font-weight:400;transform:scaleX(0.7375);">-1.5000</span>
<span class="t" style="left:332.6px;top:183.46px;font-size:9px;font-family:'Liberation Sans', sans-serif;color:#262626;font-weight:400;transform:scaleX(0.7341);">All Etch</span>
<span class="t" style="left:406px;top:183.46px;font-size:9px;font-family:'Liberation Sans', sans-serif;color:#262626;font-weight:400;transform:scaleX(0.7136);">Spacing:</span>
<span class="t" style="left:444.6px;top:183.46px;font-size:9px;font-family:'Liberation Sans', sans-serif;color:#262626;font-weight:400;transform:scaleX(0.5702);">x:</span>
<span class="t" style="left:444.8px;top:197.06px;font-size:9px;font-family:'Liberation Sans', sans-serif;color:#262626;font-weight:400;transform:scaleX(0.5702);">y:</span>
<span class="t" style="left:406px;top:210.26px;font-size:9px;font-family:'Liberation Sans', sans-serif;color:#262626;font-weight:400;transform:scaleX(0.7777);">Offset:</span>
<span class="t" style="left:444.6px;top:210.26px;font-size:9px;font-family:'Liberation Sans', sans-serif;color:#262626;font-weight:400;transform:scaleX(0.5702);">x:</span>
<span class="t" style="left:513.7px;top:210.26px;font-size:9px;font-family:'Liberation Sans', sans-serif;color:#262626;font-weight:400;transform:scaleX(0.5702);">y:</span>
<div style="left:457.8px;top:181.5px;width:134.7px;height:13px;background:#fff;border:1px solid #c4c4c4;border-top:2px solid #9a9a9a;border-left:2px solid #a8a8a8"></div>
<div style="left:457.8px;top:195.0px;width:134.7px;height:13px;background:#fff;border:1px solid #c4c4c4;border-top:2px solid #9a9a9a;border-left:2px solid #a8a8a8"></div>
<div style="left:457.8px;top:208.5px;width:44.5px;height:13px;background:#fff;border:1px solid #c4c4c4;border-top:2px solid #9a9a9a;border-left:2px solid #a8a8a8"></div>
<div style="left:526.8px;top:208.5px;width:44.7px;height:13px;background:#fff;border:1px solid #c4c4c4;border-top:2px solid #9a9a9a;border-left:2px solid #a8a8a8"></div>
<span class="t" style="left:332.6px;top:230.96px;font-size:9px;font-family:'Liberation Sans', sans-serif;color:#262626;font-weight:400;transform:scaleX(0.7305);">TOP</span>
<span class="t" style="left:406px;top:230.96px;font-size:9px;font-family:'Liberation Sans', sans-serif;color:#262626;font-weight:400;transform:scaleX(0.7136);">Spacing:</span>
<span class="t" style="left:444.6px;top:230.96px;font-size:9px;font-family:'Liberation Sans', sans-serif;color:#262626;font-weight:400;transform:scaleX(0.5702);">x:</span>
<span class="t" style="left:444.8px;top:244.56px;font-size:9px;font-family:'Liberation Sans', sans-serif;color:#262626;font-weight:400;transform:scaleX(0.5702);">y:</span>
<span class="t" style="left:406px;top:257.76px;font-size:9px;font-family:'Liberation Sans', sans-serif;color:#262626;font-weight:400;transform:scaleX(0.7777);">Offset:</span>
<span class="t" style="left:444.6px;top:257.76px;font-size:9px;font-family:'Liberation Sans', sans-serif;color:#262626;font-weight:400;transform:scaleX(0.5702);">x:</span>
<span class="t" style="left:513.7px;top:257.76px;font-size:9px;font-family:'Liberation Sans', sans-serif;color:#262626;font-weight:400;transform:scaleX(0.5702);">y:</span>
<div style="left:457.8px;top:229.0px;width:134.7px;height:13px;background:#fff;border:1px solid #c4c4c4;border-top:2px solid #9a9a9a;border-left:2px solid #a8a8a8"></div>
<span class="t" style="left:460.6px;top:231.16px;font-size:9px;font-family:'Liberation Sans', sans-serif;color:#262626;font-weight:400;transform:scaleX(0.7010);">0.0254</span>
<div style="left:457.8px;top:242.5px;width:134.7px;height:13px;background:#fff;border:1px solid #c4c4c4;border-top:2px solid #9a9a9a;border-left:2px solid #a8a8a8"></div>
<span class="t" style="left:460.6px;top:244.66px;font-size:9px;font-family:'Liberation Sans', sans-serif;color:#262626;font-weight:400;transform:scaleX(0.7010);">0.0254</span>
<div style="left:457.8px;top:256.0px;width:44.5px;height:13px;background:#fff;border:1px solid #c4c4c4;border-top:2px solid #9a9a9a;border-left:2px solid #a8a8a8"></div>
<span class="t" style="left:460.6px;top:258.16px;font-size:9px;font-family:'Liberation Sans', sans-serif;color:#262626;font-weight:400;transform:scaleX(0.7010);">0.0000</span>
<div style="left:526.8px;top:256.0px;width:44.7px;height:13px;background:#fff;border:1px solid #c4c4c4;border-top:2px solid #9a9a9a;border-left:2px solid #a8a8a8"></div>
<span class="t" style="left:529.5999999999999px;top:258.16px;font-size:9px;font-family:'Liberation Sans', sans-serif;color:#262626;font-weight:400;transform:scaleX(0.7010);">0.0000</span>
<span class="t" style="left:332.6px;top:277.96px;font-size:9px;font-family:'Liberation Sans', sans-serif;color:#262626;font-weight:400;transform:scaleX(0.7328);">BOTTOM</span>
<span class="t" style="left:406px;top:277.96px;font-size:9px;font-family:'Liberation Sans', sans-serif;color:#262626;font-weight:400;transform:scaleX(0.7136);">Spacing:</span>
<span class="t" style="left:444.6px;top:277.96px;font-size:9px;font-family:'Liberation Sans', sans-serif;color:#262626;font-weight:400;transform:scaleX(0.5702);">x:</span>
<span class="t" style="left:444.8px;top:291.56px;font-size:9px;font-family:'Liberation Sans', sans-serif;color:#262626;font-weight:400;transform:scaleX(0.5702);">y:</span>
<span class="t" style="left:406px;top:304.76px;font-size:9px;font-family:'Liberation Sans', sans-serif;color:#262626;font-weight:400;transform:scaleX(0.7777);">Offset:</span>
<span class="t" style="left:444.6px;top:304.76px;font-size:9px;font-family:'Liberation Sans', sans-serif;color:#262626;font-weight:400;transform:scaleX(0.5702);">x:</span>
<span class="t" style="left:513.7px;top:304.76px;font-size:9px;font-family:'Liberation Sans', sans-serif;color:#262626;font-weight:400;transform:scaleX(0.5702);">y:</span>
<div style="left:457.8px;top:276.0px;width:134.7px;height:13px;background:#fff;border:1px solid #c4c4c4;border-top:2px solid #9a9a9a;border-left:2px solid #a8a8a8"></div>
<span class="t" style="left:460.6px;top:278.16px;font-size:9px;font-family:'Liberation Sans', sans-serif;color:#262626;font-weight:400;transform:scaleX(0.7010);">0.0254</span>
<div style="left:457.8px;top:289.5px;width:134.7px;height:13px;background:#fff;border:1px solid #c4c4c4;border-top:2px solid #9a9a9a;border-left:2px solid #a8a8a8"></div>
<span class="t" style="left:460.6px;top:291.66px;font-size:9px;font-family:'Liberation Sans', sans-serif;color:#262626;font-weight:400;transform:scaleX(0.7010);">0.0254</span>
<div style="left:457.8px;top:303.0px;width:44.5px;height:13px;background:#fff;border:1px solid #c4c4c4;border-top:2px solid #9a9a9a;border-left:2px solid #a8a8a8"></div>
<span class="t" style="left:460.6px;top:305.16px;font-size:9px;font-family:'Liberation Sans', sans-serif;color:#262626;font-weight:400;transform:scaleX(0.7010);">0.0000</span>
<div style="left:526.8px;top:303.0px;width:44.7px;height:13px;background:#fff;border:1px solid #c4c4c4;border-top:2px solid #9a9a9a;border-left:2px solid #a8a8a8"></div>
<span class="t" style="left:529.5999999999999px;top:305.16px;font-size:9px;font-family:'Liberation Sans', sans-serif;color:#262626;font-weight:400;transform:scaleX(0.7010);">0.0000</span>
<div style="left:329px;top:353px;width:291px;height:1px;background:#a0a0a0"></div>
<div style="left:329px;top:354px;width:291px;height:1px;background:#fff"></div>
<div style="left:333px;top:362.3px;width:36.6px;height:12px;background:#e1e1e1;border:1px solid #2f7ac8"></div>
<span class="t" style="left:347.3px;top:363.86px;font-size:9px;font-family:'Liberation Sans', sans-serif;color:#262626;font-weight:400;transform:scaleX(0.6915);">OK</span>
<div style="left:569.2px;top:362.3px;width:38px;height:12px;background:#e1e1e1;border:1px solid #b8b8b8"></div>
<span class="t" style="left:581.7px;top:363.86px;font-size:9px;font-family:'Liberation Sans', sans-serif;color:#262626;font-weight:400;transform:scaleX(0.7183);">Help</span>
<div style="left:329px;top:376.5px;width:291px;height:1px;background:#e6e6e6"></div>
<div style="left:343.5px;top:377px;width:1px;height:12px;background:#e6e6e6"></div>
<span class="t" style="left:347.8px;top:378.96px;font-size:9px;font-family:'Liberation Sans', sans-serif;color:#262626;font-weight:400;transform:scaleX(0.7218);">Spacing fields allow simple equations to aid calculations; prefix with =</span>
<svg style="position:absolute;left:613px;top:384px" width="6" height="5" viewBox="0 0 6 5"><path d="M5 1V5M3 3V5M1 5H5" stroke="#b0b0b0" stroke-width="0.8"/></svg>
<span class="t" style="left:468px;top:539.19px;font-size:18.7px;font-family:'Liberation Sans', sans-serif;color:rgba(90,90,90,.62);font-weight:400;transform:scaleX(0.8744);">CSDN</span>
<span class="t" style="left:522.6px;top:540.49px;font-size:16px;font-family:'Liberation Sans', sans-serif;color:rgba(90,90,90,.62);font-weight:400;transform:scaleX(0.9538);">@</span>
<svg style="position:absolute;left:540.0px;top:541px" width="17.8" height="17.8" viewBox="0 0 17.8 17.8"><g transform="scale(1.2)"><path d="M4 0.5V12.5L2 13.5M0.5 7H13.5M11.5 0.5L5 6M6 7.5L13.5 13.5" stroke="rgba(90,90,90,.62)" stroke-width="0.75" fill="none"/></g></svg>
<svg style="position:absolute;left:559.6px;top:541px" width="17.8" height="17.8" viewBox="0 0 17.8 17.8"><g transform="scale(1.2)"><path d="M1 1.5L3 3M0.5 5.5L2.5 7M0.5 13L3 9M9 0.5V8M6 3L7 6M12 2.5L13.5 5M13.5 7.5Q10 12.5 3.5 13.5" stroke="rgba(90,90,90,.62)" stroke-width="0.75" fill="none"/></g></svg>
<svg style="position:absolute;left:579.2px;top:541px" width="17.8" height="17.8" viewBox="0 0 17.8 17.8"><g transform="scale(1.2)"><path d="M3.5 0.5L1 5H4.5L1 9.5L5 8.5M0.5 12.5L5 11M6.5 2H13.5M10 2V12.5M5.5 12.5H14" stroke="rgba(90,90,90,.62)" stroke-width="0.75" fill="none"/></g></svg>
<svg style="position:absolute;left:598.8px;top:541px" width="17.8" height="17.8" viewBox="0 0 17.8 17.8"><g transform="scale(1.2)"><path d="M1 13.5V0.5H5V13.5M1 5H5M1 8.5H5M7 1.5L8 4M13 1.5L12 4M6 5.5H14M6 9H14M10 0.5V14" stroke="rgba(90,90,90,.62)" stroke-width="0.75" fill="none"/></g></svg>
<svg style="position:absolute;left:618.4px;top:541px" width="17.8" height="17.8" viewBox="0 0 17.8 17.8"><g transform="scale(1.2)"><path d="M2 1H12L7 5M7 5V13L5 12.5M0.5 7H13.5" stroke="rgba(90,90,90,.62)" stroke-width="0.75" fill="none"/></g></svg>
<span class="t" style="left:639px;top:539.52px;font-size:18px;font-family:'Liberation Sans', sans-serif;color:rgba(90,90,90,.62);font-weight:400;transform:scaleX(1.0518);">Qt</span>
<svg style="position:absolute;left:556px;top:550.5px" width="11.08" height="11.08" viewBox="0 0 11.08 11.08"><g transform="scale(0.72)"><path d="M1 1.5L3 3M0.5 5.5L2.5 7M0.5 13L3 9M9 0.5V8M6 3L7 6M12 2.5L13.5 5M13.5 7.5Q10 12.5 3.5 13.5" stroke="rgba(20,60,20,.75)" stroke-width="1.39" fill="none"/></g></svg>
<svg style="position:absolute;left:568px;top:550.5px" width="11.08" height="11.08" viewBox="0 0 11.08 11.08"><g transform="scale(0.72)"><path d="M3.5 0.5L1 5H4.5L1 9.5L5 8.5M0.5 12.5L5 11M6.5 2H13.5M10 2V12.5M5.5 12.5H14" stroke="rgba(20,60,20,.75)" stroke-width="1.39" fill="none"/></g></svg>
<svg style="position:absolute;left:580px;top:550.5px" width="11.08" height="11.08" viewBox="0 0 11.08 11.08"><g transform="scale(0.72)"><path d="M1 13.5V0.5H5V13.5M1 5H5M1 8.5H5M7 1.5L8 4M13 1.5L12 4M6 5.5H14M6 9H14M10 0.5V14" stroke="rgba(20,60,20,.75)" stroke-width="1.39" fill="none"/></g></svg>
<svg style="position:absolute;left:592px;top:550.5px" width="11.08" height="11.08" viewBox="0 0 11.08 11.08"><g transform="scale(0.72)"><path d="M2 1H12L7 5M7 5V13L5 12.5M0.5 7H13.5" stroke="rgba(20,60,20,.75)" stroke-width="1.39" fill="none"/></g></svg>
<svg style="position:absolute;left:553px;top:545px" width="40" height="14" viewBox="0 0 40 14"><path d="M2 13L14 3M18 10L38 1" stroke="rgba(255,255,255,.8)" stroke-width="1"/></svg>
<svg style="position:absolute;left:611.0px;top:549px" width="12.9" height="12.9" viewBox="0 0 12.9 12.9"><g transform="scale(0.85)"><path d="M0.5 4H5M3 0.5V12.5L1.5 12M0.5 9L5 7M6 3H13M9.5 0.5V6M6.5 6H12L7 13M7.5 7L13 13" stroke="rgba(110,110,110,.6)" stroke-width="0.94" fill="none"/></g></svg>
<svg style="position:absolute;left:624.5px;top:549px" width="12.9" height="12.9" viewBox="0 0 12.9 12.9"><g transform="scale(0.85)"><path d="M0.5 4.5H13.5M7 0.5V13.5M6.5 5L1 11M7.5 5L13 11M9.5 1.5L11 3" stroke="rgba(110,110,110,.6)" stroke-width="0.94" fill="none"/></g></svg>
<svg style="position:absolute;left:638.0px;top:549px" width="12.9" height="12.9" viewBox="0 0 12.9 12.9"><g transform="scale(0.85)"><path d="M2 1L3 2.5M0.5 4H4.5L1 10M2.5 7V13.5M4 8L5 9M6 4H13M9.5 0.5V13M6 13H14" stroke="rgba(110,110,110,.6)" stroke-width="0.94" fill="none"/></g></svg>
<svg style="position:absolute;left:651.5px;top:549px" width="12.9" height="12.9" viewBox="0 0 12.9 12.9"><g transform="scale(0.85)"><path d="M13.5 1H1V13.5H13.5M4 4L11 11M11 4L4 11" stroke="rgba(110,110,110,.6)" stroke-width="0.94" fill="none"/></g></svg>
</body></html>
